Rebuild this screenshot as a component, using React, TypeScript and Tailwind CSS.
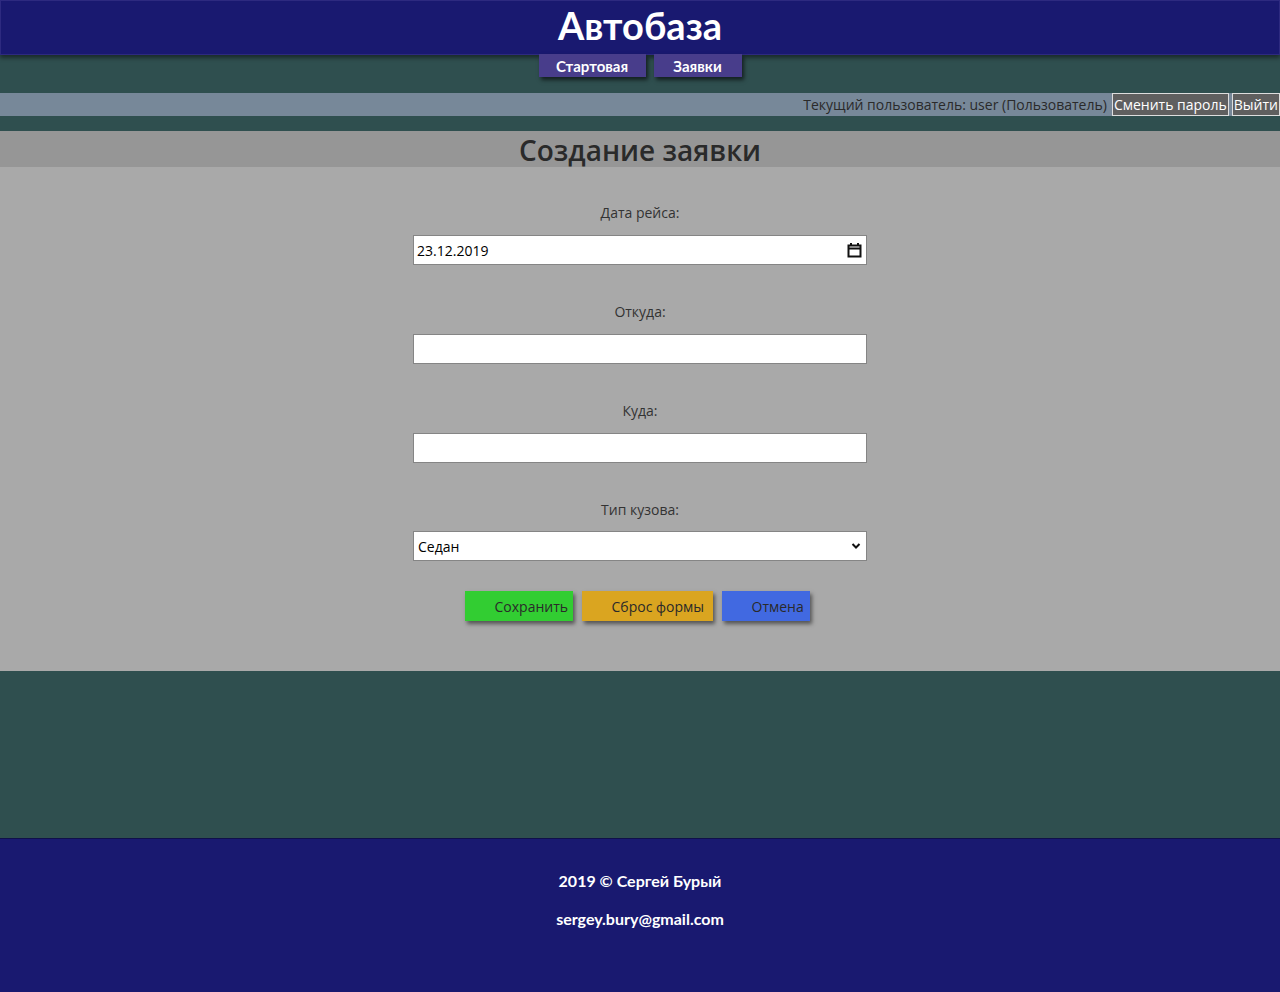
const fancy = { fontFamily: '"Comic Sans MS", Lato, sans-serif' };

function Field({ label, children }: { label: string; children: React.ReactNode }) {
  return (
    <div className="flex flex-col items-center">
      <label className="h-[20px] text-[14px] leading-[20px] text-[#333]">{label}</label>
      <div className="mt-[12px] h-[30px] w-[454px]">{children}</div>
    </div>
  );
}

export default function App() {
  return (
    <div className="flex min-h-[992px] flex-col bg-[#2f4f4f] text-[#222]" style={{ fontFamily: '"Open Sans", "Noto Sans", sans-serif' }}>
      <header className="relative z-10 flex h-[55px] items-center justify-center border border-[#2d2a80] bg-[#191970] pb-[5px] shadow-[0_3px_4px_rgba(0,0,0,0.45)]">
        <h1 className="text-[38px] font-bold leading-none text-white" style={fancy}>Автобаза</h1>
      </header>
      <nav className="relative z-20 -mt-px flex justify-center gap-[8px]">
        <a className="flex h-[23px] w-[107px] items-center justify-center bg-[#483d8b] pt-[2px] text-[15px] font-bold text-white shadow-[2px_3px_4px_rgba(0,0,0,0.6)]" style={fancy}>Стартовая</a>
        <a className="flex h-[23px] w-[88px] items-center justify-center bg-[#483d8b] pt-[2px] text-[15px] font-bold text-white shadow-[2px_3px_4px_rgba(0,0,0,0.6)]" style={fancy}>Заявки</a>
      </nav>
      <div className="mt-[16px] flex h-[23px] items-center justify-end gap-[3px] bg-[#778899] text-[14px] text-[#2a2a2a]">
        <span className="mr-[2px]">Текущий пользователь: user (Пользователь)</span>
        <button className="flex h-[23px] items-center border border-[#ddd] bg-[#5f5f5f] px-[1px] text-[14px] text-white">Сменить пароль</button>
        <button className="flex h-[23px] items-center border border-[#ddd] bg-[#5f5f5f] px-[1px] text-[14px] text-white">Выйти</button>
      </div>
      <div className="mt-[15px] flex h-[36px] items-center justify-center bg-[#969696] pt-[2px]">
        <h2 className="text-[28px] font-semibold leading-none text-[#2a2a2a]">Создание заявки</h2>
      </div>
      <main className="flex h-[504px] flex-col items-center gap-[37px] bg-[#a9a9a9] pt-[36px]">
        <Field label="Дата рейса:">
          <div className="flex h-full items-center justify-between border border-[#858585] bg-white pl-[3px] pr-[4px] text-[14px] text-black">
            <span>23.12.2019</span>
            <svg width="15" height="15" viewBox="0 0 15 15" fill="none" stroke="#111" strokeWidth="2">
              <rect x="1.5" y="2.5" width="12" height="11" />
              <line x1="1.5" y1="5.5" x2="13.5" y2="5.5" />
              <line x1="4" y1="0" x2="4" y2="3" />
              <line x1="11" y1="0" x2="11" y2="3" />
            </svg>
          </div>
        </Field>
        <Field label="Откуда:">
          <input className="h-full w-full border border-[#858585] bg-white px-[3px] text-[14px] outline-none" />
        </Field>
        <Field label="Куда:">
          <input className="h-full w-full border border-[#858585] bg-white px-[3px] text-[14px] outline-none" />
        </Field>
        <Field label="Тип кузова:">
          <div className="-mt-px flex h-full items-center justify-between border border-[#858585] bg-white pl-[4px] pr-[5px] text-[14px] text-black">
            <span>Седан</span>
            <svg width="10" height="8" viewBox="0 0 10 8" fill="none" stroke="#111" strokeWidth="2">
              <path d="M1.5 2 L5 5.5 L8.5 2" />
            </svg>
          </div>
        </Field>
        <div className="-mt-[8px] mr-[6px] flex gap-[9px]">
          <button className="h-[30px] w-[108px] bg-[#32cd32] pl-[30px] pr-[4px] text-left text-[14px] text-[#2a2a2a] shadow-[2px_3px_4px_rgba(0,0,0,0.5)]">Сохранить</button>
          <button className="h-[30px] w-[131px] bg-[#daa520] pl-[30px] pr-[4px] text-left text-[14px] text-[#2a2a2a] shadow-[2px_3px_4px_rgba(0,0,0,0.5)]">Сброс формы</button>
          <button className="h-[30px] w-[88px] bg-[#4169e1] pl-[30px] pr-[4px] text-left text-[14px] text-[#2a2a2a] shadow-[2px_3px_4px_rgba(0,0,0,0.5)]">Отмена</button>
        </div>
      </main>
      <div className="flex-1" />
      <footer className="flex h-[154px] flex-col items-center border-t border-[#10104a] bg-[#191970] pt-[32px] text-[16px] font-bold text-white" style={fancy}>
        <p className="leading-[20px]">2019 © Сергей Бурый</p>
        <p className="mt-[18px] leading-[20px]">sergey.bury@gmail.com</p>
      </footer>
    </div>
  );
}
